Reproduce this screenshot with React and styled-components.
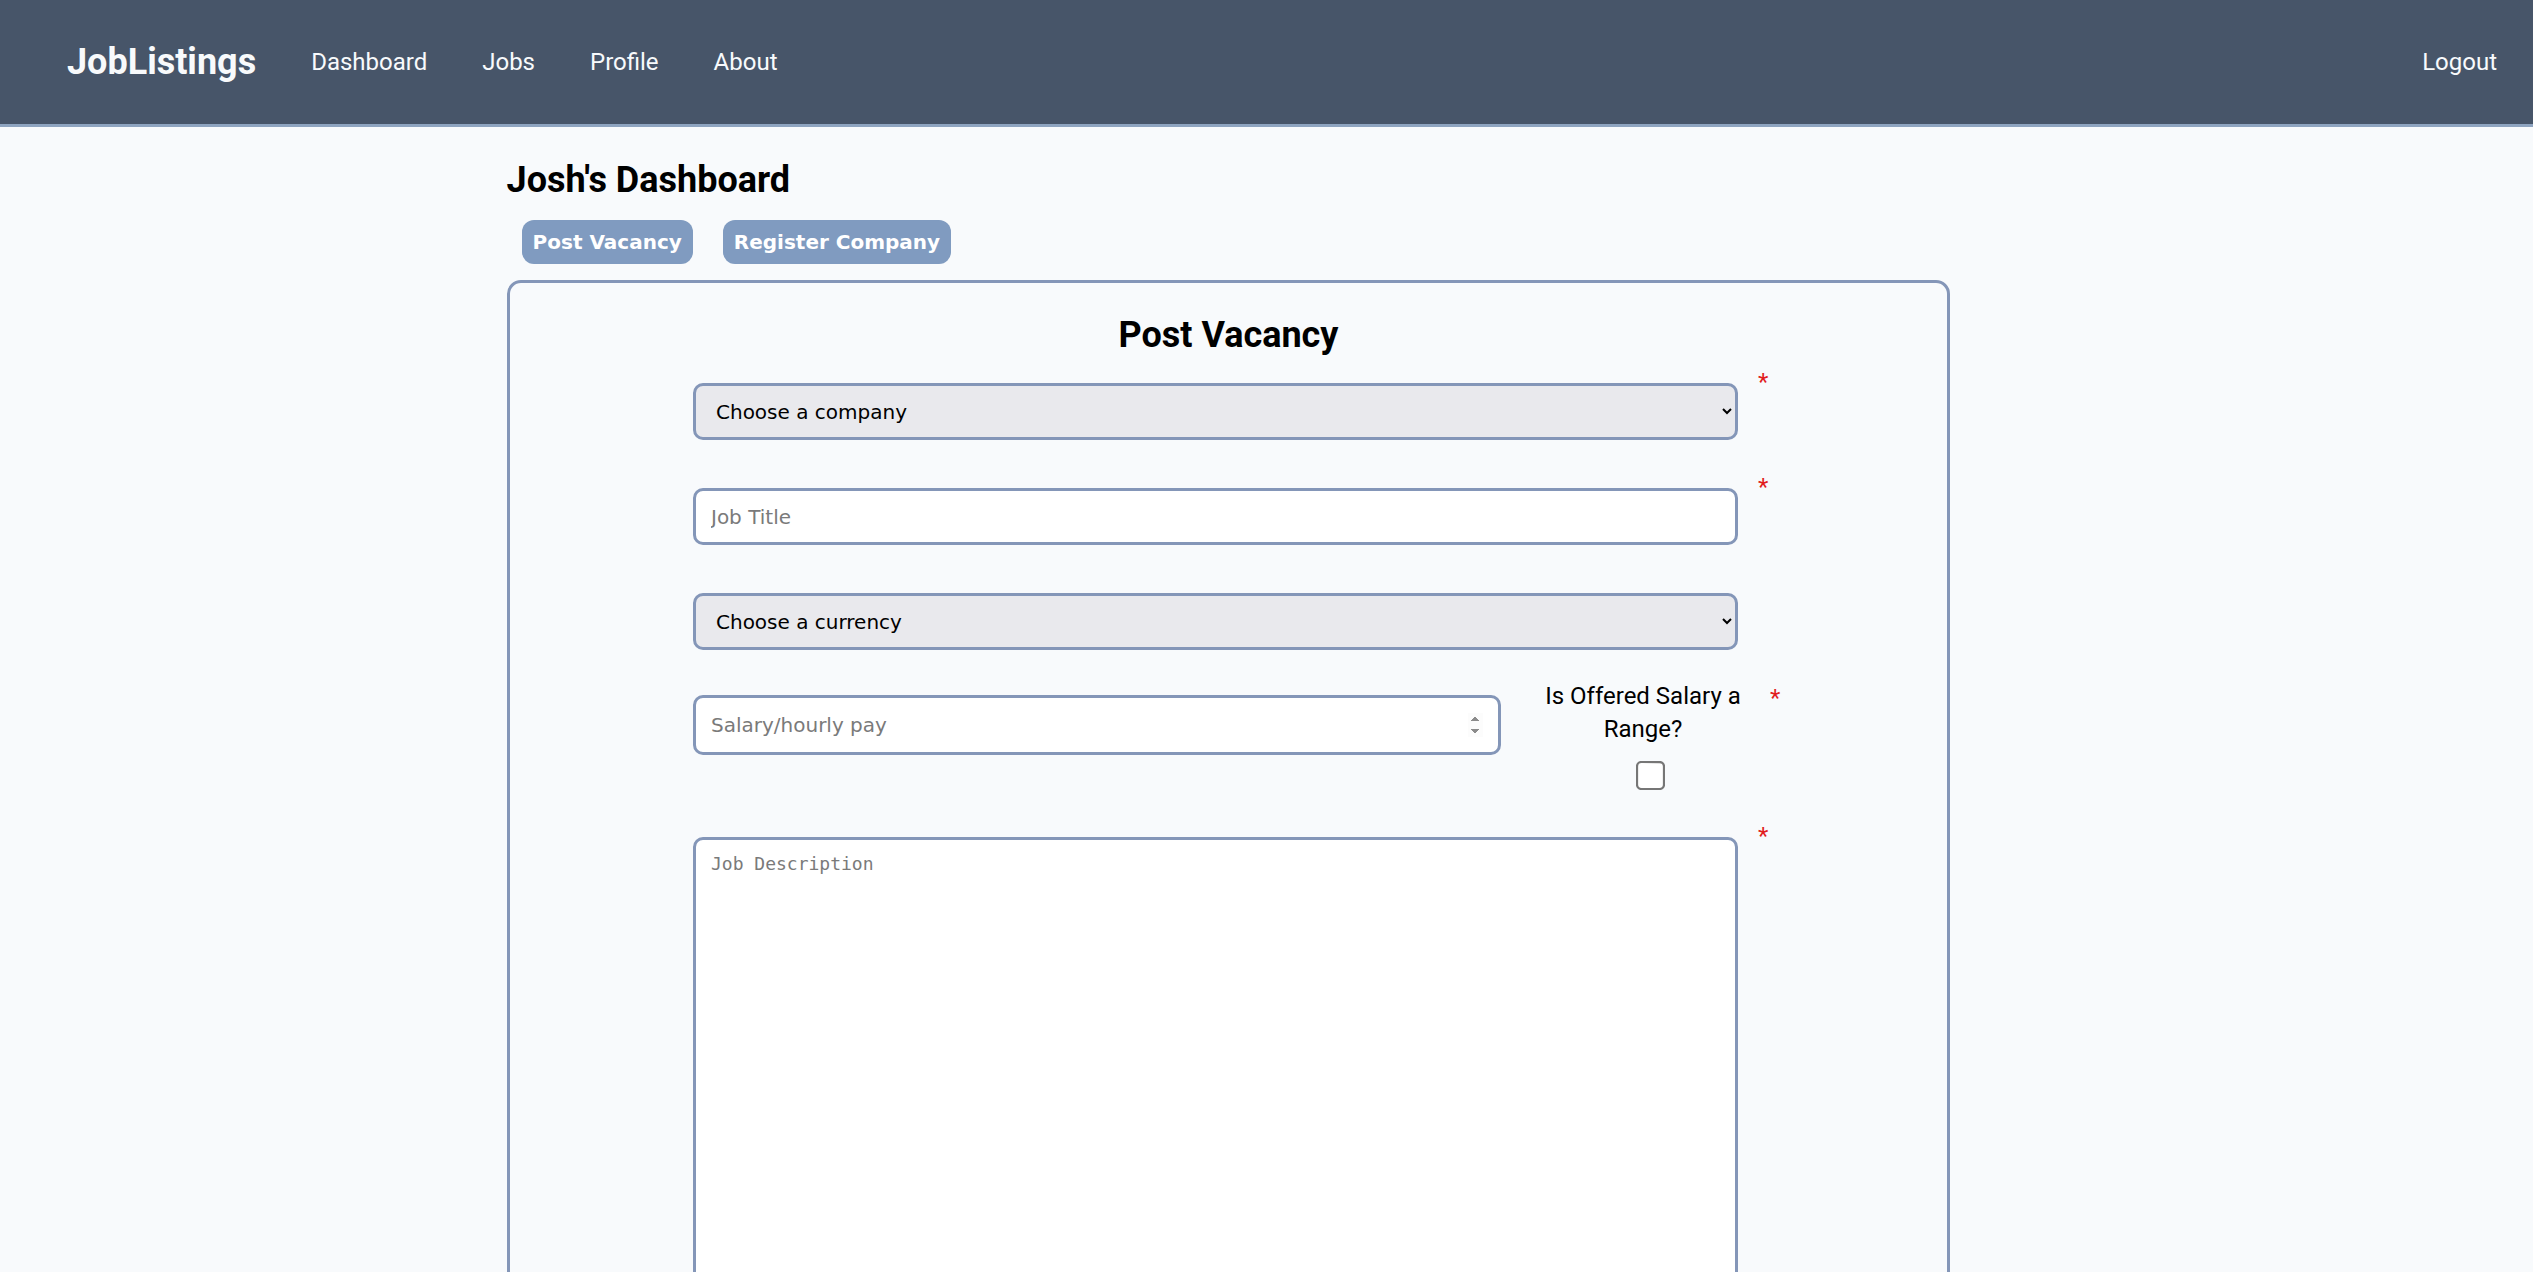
import React, { useState } from 'react';
import styled, { createGlobalStyle } from 'styled-components';

const GlobalStyle = createGlobalStyle`
    body {
        margin: 0;
        background-color: #f8fafc;
        font-family: Roboto, "Liberation Sans", sans-serif;
    }
`;

const Navbar = styled.nav`
    height: 124px;
    background-color: #475569;
    border-bottom: 3px solid #8ea4c0;
    display: flex;
    align-items: center;
    justify-content: space-between;
    padding: 0 36px 0 67px;
    color: #f8fafc;
`;

const NavLeft = styled.div`
    display: flex;
    align-items: center;
    gap: 55px;
`;

const Logo = styled.span`
    font-size: 36px;
    font-weight: 700;
`;

const NavLink = styled.span`
    font-size: 24px;
    cursor: pointer;
`;

const PageWrapper = styled.main`
    margin-left: 20%;
    width: 57%;
    padding-top: 32px;
`;

const PageHeading = styled.h1`
    margin: 0;
    font-size: 36px;
    font-weight: 700;
    line-height: 42px;
`;

const TabRow = styled.div`
    display: flex;
    margin-top: 19px;
    margin-bottom: 16px;
`;

const TabButton = styled.button`
    margin: 0 15px;
    padding: 10px 11px;
    border: none;
    border-radius: 12px;
    background-color: #809bc0;
    color: #fff;
    font-family: "DejaVu Sans", sans-serif;
    font-weight: 700;
    font-size: 20px;
    cursor: pointer;
`;

const Card = styled.section`
    border: 3px solid #8496b8;
    border-radius: 14px;
    padding: 31px 0 60px;
    display: flex;
    flex-direction: column;
    align-items: center;
`;

const CardHeading = styled.h2`
    margin: 0 0 27px;
    font-size: 36px;
    font-weight: 700;
    line-height: 42px;
`;

const Form = styled.form`
    width: 1071px;
    display: flex;
    flex-direction: column;
    align-items: flex-start;
`;

const Row = styled.div`
    display: flex;
    align-items: flex-start;
    margin-top: ${({ $space }) => $space || 0}px;
`;

const Required = styled.span`
    color: #e11d1d;
    font-size: 24px;
    line-height: 20px;
    margin-left: ${({ $left }) => $left ?? 20}px;
    margin-top: ${({ $top }) => $top ?? -11}px;
`;

const Select = styled.select`
    width: 1045px;
    height: 57px;
    box-sizing: border-box;
    border: 3px solid #8496b8;
    border-radius: 10px;
    padding: 0 12px 0 16px;
    font-family: "DejaVu Sans", sans-serif;
    font-size: 20px;
    color: #000;
    background-color: #e9e9ed;
`;

const Input = styled.input`
    flex-shrink: 0;
    width: ${({ $width }) => $width || 1045}px;
    height: ${({ $height }) => $height || 57}px;
    box-sizing: border-box;
    border: 3px solid #8496b8;
    border-radius: 10px;
    padding: 0 15px;
    font-family: "DejaVu Sans", sans-serif;
    font-size: 20px;
    background-color: #fff;
    margin-top: ${({ $top }) => $top || 0}px;

    &::placeholder {
        color: #7a7a7a;
    }

    &::-webkit-inner-spin-button {
        opacity: 1;
    }
`;

const RangeColumn = styled.div`
    flex-shrink: 0;
    width: 250px;
    margin-left: 17px;
    display: flex;
    flex-direction: column;
    align-items: center;
`;

const RangeLabel = styled.label`
    width: 210px;
    text-align: center;
    font-size: 24px;
    line-height: 33px;
    color: #000;
`;

const Checkbox = styled.input`
    width: 13px;
    height: 13px;
    margin: 23px 0 8px 16px;
    transform: scale(2.25);
`;

const TextArea = styled.textarea`
    width: 1045px;
    height: 520px;
    box-sizing: border-box;
    border: 3px solid #8496b8;
    border-radius: 10px;
    padding: 13px 15px;
    font-family: "DejaVu Sans Mono", monospace;
    font-size: 18px;
    resize: none;
    background-color: #fff;

    &::placeholder {
        color: #7a7a7a;
    }
`;

const App = () => {
    const [isRange, setIsRange] = useState(false);

    return (
        <>
            <GlobalStyle />
            <Navbar>
                <NavLeft>
                    <Logo>JobListings</Logo>
                    <NavLink>Dashboard</NavLink>
                    <NavLink>Jobs</NavLink>
                    <NavLink>Profile</NavLink>
                    <NavLink>About</NavLink>
                </NavLeft>
                <NavLink>Logout</NavLink>
            </Navbar>
            <PageWrapper>
                <PageHeading>Josh's Dashboard</PageHeading>
                <TabRow>
                    <TabButton>Post Vacancy</TabButton>
                    <TabButton>Register Company</TabButton>
                </TabRow>
                <Card>
                    <CardHeading>Post Vacancy</CardHeading>
                    <Form onSubmit={(e) => e.preventDefault()}>
                        <Row>
                            <Select defaultValue="">
                                <option value="">Choose a company</option>
                            </Select>
                            <Required>*</Required>
                        </Row>
                        <Row $space={48}>
                            <Input type="text" placeholder="Job Title" />
                            <Required>*</Required>
                        </Row>
                        <Row $space={48}>
                            <Select defaultValue="">
                                <option value="">Choose a currency</option>
                            </Select>
                        </Row>
                        <Row $space={30}>
                            <Input type="number" placeholder="Salary/hourly pay" $width={808} $height={60} $top={15} />
                            <RangeColumn>
                                <RangeLabel htmlFor="range">Is Offered Salary a Range?</RangeLabel>
                                <Checkbox
                                    id="range"
                                    type="checkbox"
                                    checked={isRange}
                                    onChange={() => setIsRange(!isRange)}
                                />
                            </RangeColumn>
                            <Required $left={2} $top={8}>*</Required>
                        </Row>
                        <Row $space={47}>
                            <TextArea placeholder="Job Description" />
                            <Required>*</Required>
                        </Row>
                    </Form>
                </Card>
            </PageWrapper>
        </>
    );
};

export default App;
